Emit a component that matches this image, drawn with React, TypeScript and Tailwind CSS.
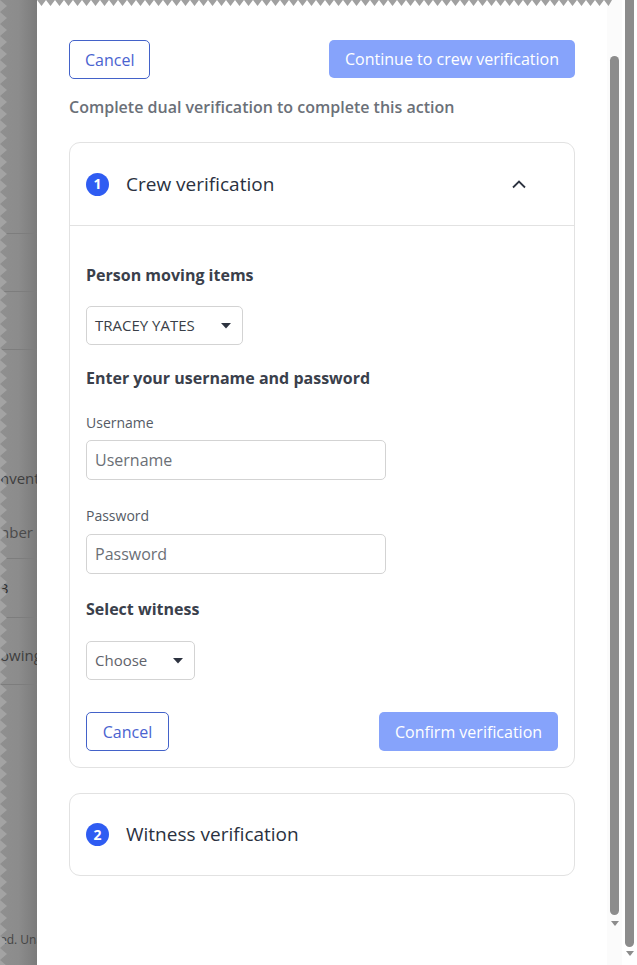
import React from "react";

function Zigzag({ width, vertical = false }: { width: number; vertical?: boolean }) {
  const pts: string[] = [];
  const step = 9;
  for (let x = 0; x <= width; x += step) {
    pts.push(`${x},0`, `${x + step / 2},6`);
  }
  pts.push(`${width},0`);
  if (vertical) {
    return (
      <svg width="8" height={width} className="block">
        <polygon
          points={Array.from({ length: Math.ceil(width / 12) }, (_, i) => `0,${i * 12} 7,${i * 12 + 6} 0,${i * 12 + 12}`).join(" ")}
          fill="#a3a3a3"
        />
      </svg>
    );
  }
  return (
    <svg width={width} height="7" className="block">
      <polygon points={`0,0 ${pts.join(" ")} ${width},0`} fill="#a0a0a0" />
    </svg>
  );
}

function Caret() {
  return (
    <svg width="10" height="6" viewBox="0 0 10 6" className="block">
      <polygon points="0,0 10,0 5,5.5" fill="#2d3340" />
    </svg>
  );
}

function Badge({ n }: { n: string }) {
  return (
    <div className="w-[23px] h-[23px] rounded-full bg-[#2f5cf2] text-white flex items-center justify-center text-[14px] font-bold leading-none">
      {n}
    </div>
  );
}

export default function App() {
  const font = { fontFamily: '"Open Sans", "Noto Sans", sans-serif' };
  return (
    <div className="w-[637px] h-[965px] flex overflow-hidden bg-white" style={font}>
      {/* left faded background */}
      <div className="w-[37px] h-full relative overflow-hidden bg-gradient-to-r from-[#8f8f8f] via-[#8c8c8c] to-[#7b7b7b] text-[#3e3e3e] text-[15px] leading-[20px]">
        <div className="absolute left-0 top-0">
          <Zigzag width={965} vertical />
        </div>
        <div className="flex flex-col">
          <div className="h-[234px] border-b border-[#7d7d7d]"></div>
          <div className="h-[58px] border-b border-[#7d7d7d]"></div>
          <div className="h-[58px] border-b border-[#7d7d7d]"></div>
          <div className="h-[209px] border-b border-[#7d7d7d] flex flex-col whitespace-nowrap pt-[118px]">
            <div>nvent</div>
            <div className="mt-[34px] text-[#4a4a4a]">nber</div>
          </div>
          <div className="h-[59px] border-b border-[#7d7d7d] flex items-center whitespace-nowrap text-[#303030]">3</div>
          <div className="h-[67px] border-b border-[#7d7d7d] flex items-center whitespace-nowrap pt-[8px]">owing</div>
          <div className="whitespace-nowrap text-[12px] leading-[16px] text-[#444] pt-[247px]">ed. Unau</div>
        </div>
      </div>

      {/* main panel */}
      <div className="flex-1 h-full relative flex">
        <div className="absolute left-0 top-0">
          <Zigzag width={575} />
        </div>
        <div className="flex-1 pl-[32px] pr-[32px] pt-[40px]">
          <div className="flex justify-between items-start">
            <button className="h-[39px] px-[15px] border border-[#4362c9] rounded-[5px] text-[#4a63d0] text-[16px] bg-white">
              Cancel
            </button>
            <button className="h-[38px] px-[16px] rounded-[5px] bg-[#86a3fb] text-white text-[16px]">
              Continue to crew verification
            </button>
          </div>
          <div className="mt-[16px] text-[16px] leading-[24px] font-semibold text-[#6b7078]">
            Complete dual verification to complete this action
          </div>

          {/* card 1 */}
          <div className="mt-[23px] border border-[#e2e2e2] rounded-[11px]">
            <div className="h-[83px] flex items-center pl-[16px] pr-[47px] border-b border-[#e2e2e2]">
              <Badge n="1" />
              <div className="ml-[17px] text-[19px] text-[#2a3140] font-medium flex-1">Crew verification</div>
              <svg width="16" height="10" viewBox="0 0 16 10" className="block">
                <polyline points="2,8.5 8,2.5 14,8.5" fill="none" stroke="#2d3340" strokeWidth="1.8" />
              </svg>
            </div>
            <div className="pl-[16px] pr-[16px] pt-[37px] pb-[16px]">
              <div className="text-[16px] leading-[24px] font-bold text-[#3a404b]">Person moving items</div>
              <div className="mt-[19px] w-[157px] h-[39px] border border-[#d3d3d3] rounded-[5px] flex items-center justify-between pl-[8px] pr-[11px] text-[15px] text-[#3a3f48]">
                <span>TRACEY YATES</span>
                <Caret />
              </div>
              <div className="mt-[21px] text-[16px] leading-[24px] font-bold text-[#3a404b]">Enter your username and password</div>
              <div className="mt-[23px] text-[14px] leading-[20px] text-[#555b65]">Username</div>
              <div className="mt-[7px] w-[300px] h-[40px] border border-[#d3d3d3] rounded-[5px] flex items-center pl-[8px] text-[16px] text-[#6b6f76]">
                Username
              </div>
              <div className="mt-[26px] text-[14px] leading-[20px] text-[#555b65]">Password</div>
              <div className="mt-[8px] w-[300px] h-[40px] border border-[#d3d3d3] rounded-[5px] flex items-center pl-[8px] text-[16px] text-[#6b6f76]">
                Password
              </div>
              <div className="mt-[23px] text-[16px] leading-[24px] font-bold text-[#3a404b]">Select witness</div>
              <div className="mt-[20px] w-[109px] h-[39px] border border-[#d3d3d3] rounded-[5px] flex items-center justify-between pl-[8px] pr-[11px] text-[15px] text-[#5f636b]">
                <span>Choose</span>
                <Caret />
              </div>
              <div className="mt-[32px] flex justify-between items-center">
                <button className="h-[39px] w-[83px] border border-[#4362c9] rounded-[5px] text-[#4a63d0] text-[16px] bg-white">
                  Cancel
                </button>
                <button className="h-[39px] w-[179px] rounded-[5px] bg-[#86a3fb] text-white text-[16px]">
                  Confirm verification
                </button>
              </div>
            </div>
          </div>

          {/* card 2 */}
          <div className="mt-[25px] h-[83px] border border-[#e2e2e2] rounded-[11px] flex items-center pl-[16px]">
            <Badge n="2" />
            <div className="ml-[17px] text-[19px] text-[#2a3140] font-medium">Witness verification</div>
          </div>
        </div>

        {/* inner scrollbar */}
        <div className="w-[15px] h-full bg-[#fbfbfb] flex flex-col items-center pt-[56px]">
          <div className="w-[9px] h-[859px] rounded-full bg-[#8c8c8c]"></div>
          <svg width="8" height="6" viewBox="0 0 8 6" className="block mt-[6px]">
            <polygon points="0,0 8,0 4,5" fill="#8c8c8c" />
          </svg>
        </div>
      </div>

      {/* outer scrollbar */}
      <div className="w-[15px] h-full bg-white flex flex-col items-center">
        <div className="w-[9px] h-[947px] rounded-b-full bg-[#8c8c8c]"></div>
        <svg width="8" height="6" viewBox="0 0 8 6" className="block mt-[4px]">
          <polygon points="0,0 8,0 4,5" fill="#8c8c8c" />
        </svg>
      </div>
    </div>
  );
}
